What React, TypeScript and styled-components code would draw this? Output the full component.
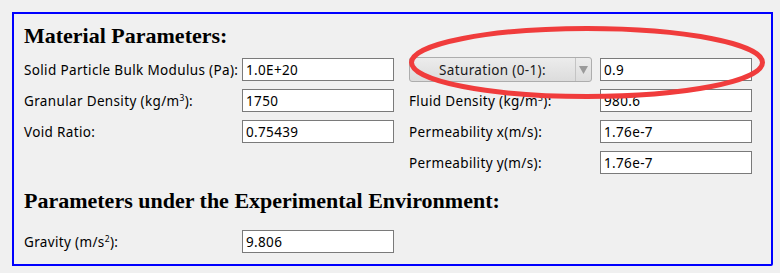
import React from 'react'
import styled, { createGlobalStyle } from 'styled-components'

const GlobalStyle = createGlobalStyle`
  html, body {
    margin: 0;
    padding: 0;
    background: #f0f0f0;
  }
  #root {
    width: 780px;
    height: 273px;
    overflow: hidden;
  }
`

const uiFont = `'Noto Sans', 'Open Sans', sans-serif`

const Page = styled.div`
  width: 780px;
  height: 273px;
  padding: 12px 0 0 12px;
  box-sizing: border-box;
  background: #f0f0f0;
`

const Panel = styled.div`
  position: relative;
  width: 761px;
  height: 254px;
  box-sizing: border-box;
  border: 2px solid #0000ff;
  border-bottom-right-radius: 2px;
  padding: 11px 0 0 10px;
`

const Heading = styled.h2<{ $gap?: number }>`
  margin: ${p => p.$gap ?? 0}px 0 0 0;
  font-family: 'Liberation Serif', 'Times New Roman', serif;
  font-weight: bold;
  font-size: 22px;
  line-height: 22px;
  color: #000;
`

const Columns = styled.div<{ $gap?: number }>`
  display: flex;
  margin-top: ${p => p.$gap ?? 11}px;
`

const FieldGrid = styled.div<{ $label: number }>`
  display: grid;
  grid-template-columns: ${p => p.$label}px 152px;
  grid-auto-rows: 23px;
  row-gap: 8px;
  align-items: center;
`

const RightGrid = styled(FieldGrid)`
  margin-left: 15px;
`

const Label = styled.span`
  font-family: ${uiFont};
  font-size: 13.5px;
  letter-spacing: 0.35px;
  color: #000;
  white-space: nowrap;
`

const Input = styled.div`
  height: 23px;
  box-sizing: border-box;
  border: 1px solid #7a7a7a;
  background: #fff;
  padding: 0 3px;
  display: flex;
  align-items: center;
  font-family: ${uiFont};
  font-size: 13.5px;
  letter-spacing: 0.35px;
  color: #000;
`

const Combo = styled.div`
  width: 183px;
  height: 25px;
  box-sizing: border-box;
  border: 1px solid #adadad;
  border-radius: 3px;
  background: linear-gradient(#ececec, #dcdcdc);
  display: flex;
  align-items: stretch;
`

const ComboText = styled.span`
  flex: 1;
  display: flex;
  align-items: center;
  justify-content: center;
  font-family: ${uiFont};
  font-size: 13.5px;
  letter-spacing: 0.35px;
  color: #1a1a1a;
`

const ComboArrow = styled.span`
  width: 15px;
  border-left: 1px solid #c4c4c4;
  display: flex;
  align-items: center;
  justify-content: center;
`

const Annotation = styled.svg`
  position: absolute;
  left: 392px;
  top: 9px;
  pointer-events: none;
`

const Sup = styled.sup`
  font-size: 8.5px;
  line-height: 0;
`

type Field = { label: React.ReactNode; value: string }

const left: Field[] = [
  { label: 'Solid Particle Bulk Modulus (Pa):', value: '1.0E+20' },
  { label: <>Granular Density (kg/m<Sup>3</Sup>):</>, value: '1750' },
  { label: 'Void Ratio:', value: '0.75439' },
]

const right: Field[] = [
  { label: <>Fluid Density (kg/m<Sup>3</Sup>):</>, value: '980.6' },
  { label: 'Permeability x(m/s):', value: '1.76e-7' },
  { label: 'Permeability y(m/s):', value: '1.76e-7' },
]

export default function App() {
  return (
    <Page>
      <GlobalStyle />
      <Panel>
        <Heading>Material Parameters:</Heading>
        <Columns>
          <FieldGrid $label={218}>
            {left.map((f, i) => (
              <React.Fragment key={i}>
                <Label>{f.label}</Label>
                <Input>{f.value}</Input>
              </React.Fragment>
            ))}
          </FieldGrid>
          <RightGrid $label={191}>
            <Combo>
              <ComboText>Saturation (0-1):</ComboText>
              <ComboArrow>
                <svg width="9" height="8" viewBox="0 0 9 8">
                  <path d="M0 0 H9 L4.5 8 Z" fill="#9a9a9a" />
                </svg>
              </ComboArrow>
            </Combo>
            <Input>0.9</Input>
            {right.map((f, i) => (
              <React.Fragment key={i}>
                <Label>{f.label}</Label>
                <Input>{f.value}</Input>
              </React.Fragment>
            ))}
          </RightGrid>
        </Columns>
        <Heading $gap={16}>Parameters under the Experimental Environment:</Heading>
        <Columns $gap={18}>
          <FieldGrid $label={218}>
            <Label>Gravity (m/s<Sup>2</Sup>):</Label>
            <Input>9.806</Input>
          </FieldGrid>
        </Columns>
        <Annotation width="362" height="79" viewBox="0 0 362 79">
          <ellipse cx="181" cy="39.5" rx="175.5" ry="34" fill="none" stroke="#f03c3c" strokeWidth="5" />
        </Annotation>
      </Panel>
    </Page>
  )
}
